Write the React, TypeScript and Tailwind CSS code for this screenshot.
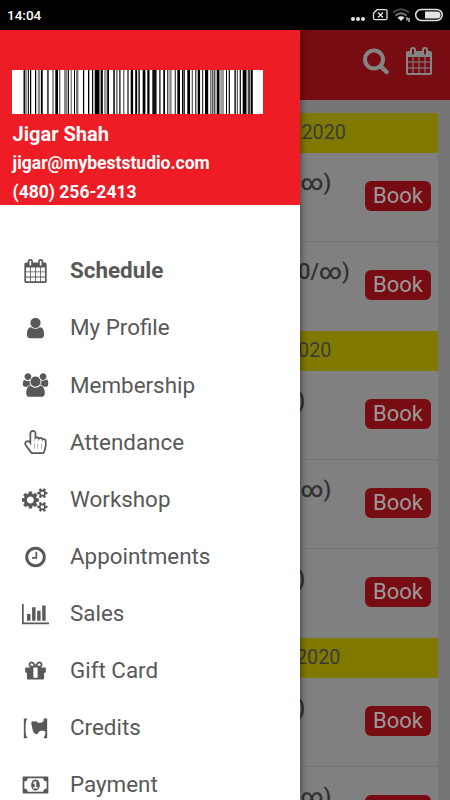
const CALENDAR =
  'M192 1664h288v-288h-288v288zm352 0h320v-288h-320v288zm-352-352h288v-320h-288v320zm352 0h320v-320h-320v320zm-352-384h288v-288h-288v288zm736 736h320v-288h-320v288zm-384-736h320v-288h-320v288zm768 736h288v-288h-288v288zm-384-352h320v-320h-320v320zm-352-864v-288q0-13-9.5-22.5t-22.5-9.5h-64q-13 0-22.5 9.5t-9.5 22.5v288q0 13 9.5 22.5t22.5 9.5h64q13 0 22.5-9.5t9.5-22.5zm736 864h288v-320h-288v320zm-384-384h320v-288h-320v288zm384 0h288v-288h-288v288zm32-480v-288q0-13-9.5-22.5t-22.5-9.5h-64q-13 0-22.5 9.5t-9.5 22.5v288q0 13 9.5 22.5t22.5 9.5h64q13 0 22.5-9.5t9.5-22.5zm384-64v1280q0 52-38 90t-90 38h-1408q-52 0-90-38t-38-90v-1280q0-52 38-90t90-38h128v-96q0-66 47-113t113-47h64q66 0 113 47t47 113v96h384v-96q0-66 47-113t113-47h64q66 0 113 47t47 113v96h128q52 0 90 38t38 90z'
const USER =
  'M1536 1399q0 109-62.5 187t-150.5 78h-854q-88 0-150.5-78t-62.5-187q0-85 8.5-160.5t31.5-152 58.5-131 94-89 134.5-34.5q131 128 313 128t313-128q76 0 134.5 34.5t94 89 58.5 131 31.5 152 8.5 160.5zm-256-887q0 159-112.5 271.5t-271.5 112.5-271.5-112.5-112.5-271.5 112.5-271.5 271.5-112.5 271.5 112.5 112.5 271.5z'
const USERS =
  'M657 896q-162 5-265 128h-134q-82 0-138-40.5t-56-118.5q0-353 124-353 6 0 43.5 21t97.5 42.5 119 21.5q67 0 133-23-5 37-5 66 0 159 90 293zm1071 637q0 120-73 189.500t-194 69.5h-874q-121 0-194-69.5t-73-189.5q0-53 3.5-103.5t14-109 26.5-108.5 43-97.5 62-81 85.5-53.5 111.500-20q10 0 43 21.500t73 48 107 48 135 21.500 135-21.500 107-48 73-48 43-21.500q61 0 111.500 20t85.5 53.5 62 81 43 97.5 26.500 108.500 14 109 3.500 103.500zm-1024-1277q0 106-75 181t-181 75-181-75-75-181 75-181 181-75 181 75 75 181zm704 384q0 159-112.500 271.500t-271.500 112.500-271.500-112.500-112.500-271.500 112.500-271.500 271.500-112.500 271.500 112.500 112.500 271.500zm576 225q0 78-56 118.500t-138 40.500h-134q-103-123-265-128 90-134 90-293 0-29-5-66 66 23 133 23 59 0 119-21.500t97.500-42.500 43.500-21q124 0 124 353zm-128-609q0 106-75 181t-181 75-181-75-75-181 75-181 181-75 181 75 75 181z'
const HAND =
  'M640 128q-53 0-90.5 37.5t-37.5 90.5v896l-151-202q-41-54-107-54-52 0-89 38t-37 90q0 43 26 77l384 512q38 51 102 51h718q22 0 39.5-13.5t22.500-34.500l92-368q24-96 24-194v-217q0-41-28-71t-68-30-68 28-28 68h-32v-61q0-48-32-81.500t-80-33.500q-46 0-79 33t-33 79v64h-32v-90q0-55-37-94.500t-91-39.500q-53 0-90.500 37.500t-37.500 90.500v96h-32v-570q0-55-37-94.500t-91-39.500zm0-128q107 0 181.500 77.500t74.500 184.500v220q22-2 32-2 99 0 173 69 47-21 99-21 113 0 184 87 27-7 56-7 94 0 159 67.500t65 161.500v217q0 116-28 225l-92 368q-16 64-68 104.500t-118 40.500h-718q-60 0-114.500-27.500t-90.500-74.500l-384-512q-51-68-51-154 0-105 74.500-180.500t179.500-75.500q71 0 130 35v-547q0-106 75-181t181-75zm128 1408v-384h-32v384h32zm256 0v-384h-32v384h32zm256 0v-384h-32v384h32z'
const COGS =
  'M832 896q0-106-75-181t-181-75-181 75-75 181 75 181 181 75 181-75 75-181zm768 512q0-52-38-90t-90-38-90 38-38 90q0 53 37.500 90.500t90.500 37.500 90.500-37.500 37.500-90.500zm0-1024q0-52-38-90t-90-38-90 38-38 90q0 53 37.500 90.500t90.500 37.500 90.500-37.500 37.500-90.500zm-384 421v185q0 10-7 19.500t-16 10.500l-155 24q-11 35-32 76 34 48 90 115 7 11 7 20 0 12-7 19-23 30-82.500 89.500t-78.500 59.500q-11 0-21-7l-115-90q-37 19-77 31-11 108-23 155-7 24-30 24h-186q-11 0-20-7.500t-10-17.500l-23-153q-34-10-75-31l-118 89q-7 7-20 7-11 0-21-8-144-133-144-160 0-9 7-19 10-14 41-53t47-61q-23-44-35-82l-152-24q-10-1-17-9.500t-7-19.500v-185q0-10 7-19.500t16-10.500l155-24q11-35 32-76-34-48-90-115-7-11-7-20 0-12 7-20 22-30 82-89t79-59q11 0 21 7l115 90q34-18 77-32 11-108 23-154 7-24 30-24h186q11 0 20 7.500t10 17.500l23 153q34 10 75 31l118-89q8-7 20-7 11 0 21 8 144 133 144 160 0 8-7 19-12 16-42 54t-45 60q23 48 34 82l152 23q10 2 17 10.500t7 19.500zm640 533v140q0 16-149 31-12 27-30 52 51 113 51 138 0 4-4 7-122 71-124 71-8 0-46-47t-52-68q-20 2-30 2t-30-2q-14 21-52 68t-46 47q-2 0-124-71-4-3-4-7 0-25 51-138-18-25-30-52-149-15-149-31v-140q0-16 149-31 13-29 30-52-51-113-51-138 0-4 4-7 4-2 35-20t59-34 30-16q8 0 46 46.500t52 67.500q20-2 30-2t30 2q51-71 92-112l6-2q4 0 124 70 4 3 4 7 0 25-51 138 17 23 30 52 149 15 149 31zm0-1024v140q0 16-149 31-12 27-30 52 51 113 51 138 0 4-4 7-122 71-124 71-8 0-46-47t-52-68q-20 2-30 2t-30-2q-14 21-52 68t-46 47q-2 0-124-71-4-3-4-7 0-25 51-138-18-25-30-52-149-15-149-31v-140q0-16 149-31 13-29 30-52-51-113-51-138 0-4 4-7 4-2 35-20t59-34 30-16q8 0 46 46.500t52 67.500q20-2 30-2t30 2q51-71 92-112l6-2q4 0 124 70 4 3 4 7 0 25-51 138 17 23 30 52 149 15 149 31z'
const CLOCK =
  'M1024 544v448q0 14-9 23t-23 9h-320q-14 0-23-9t-9-23v-64q0-14 9-23t23-9h224v-352q0-14 9-23t23-9h64q14 0 23 9t9 23zm416 352q0-148-73-273t-198-198-273-73-273 73-198 198-73 273 73 273 198 198 273 73 273-73 198-198 73-273zm224 0q0 209-103 385.500t-279.500 279.500-385.500 103-385.500-103-279.500-279.500-103-385.500 103-385.500 279.500-279.500 385.500-103 385.500 103 279.500 279.500 103 385.500z'
const CHART =
  'M640 896v512h-256v-512h256zm384-512v1024h-256v-1024h256zm1024 1152v128h-2048v-1536h128v1408h1920zm-640-896v768h-256v-768h256zm384-384v1152h-256v-1152h256z'
const GIFT =
  'M1056 1356v-716h-320v716q0 25 18 38.500t46 13.500h192q28 0 46-13.500t18-38.500zm-456-844h195l-126-161q-26-31-69-31-40 0-68 28t-28 68 28 68 68 28zm688-96q0-40-28-68t-68-28q-43 0-69 31l-125 161h194q40 0 68-28t28-68zm376 256v320q0 14-9 23t-23 9h-96v416q0 40-28 68t-68 28h-1088q-40 0-68-28t-28-68v-416h-96q-14 0-23-9t-9-23v-320q0-14 9-23t23-9h440q-93 0-158.500-65.500t-65.500-158.500 65.500-158.500 158.500-65.500q107 0 168 77l128 165 128-165q61-77 168-77 93 0 158.500 65.500t65.500 158.500-65.500 158.500-158.500 65.500h440q14 0 23 9t9 23z'
const CREDITS =
  'M25 187h250v60q-125 60-125 674t125 674v60h-250zM1767 187h-270v70q50 30 0 110q-80 40-110 110q-160 50-310 20q-70-110-210-110q-110 50-220 10q-70 60-70 160q40 100 60 260q30 250 130 420q70 130 220 130q110-20 140-150q60-100 190-120q130-20 240 30q70 0 90 110q-20 220-140 390v30h260z'
const MONEY =
  'M768 1152h384v-96h-128v-448h-114l-148 137 77 80q42-37 55-57h2v288h-128v96zm512-256q0 70-21 142t-59.500 134-101.500 101-138 39-138-39-101.500-101-59.500-134-21-142 21-142 59.500-134 101.500-101 138-39 138 39 101.500 101 59.500 134 21 142zm512 256v-512q-106 0-181-75t-75-181h-1152q0 106-75 181t-181 75v512q106 0 181 75t75 181h1152q0-106 75-181t181-75zm128-832v1152q0 26-19 45t-45 19h-1792q-26 0-45-19t-19-45v-1152q0-26 19-45t45-19h1792q26 0 45 19t19 45z'

const menu = [
  { label: 'Schedule', box: '0 0 1792 1792', icon: CALENDAR },
  { label: 'My Profile', box: '0 0 1792 1792', icon: USER },
  { label: 'Membership', box: '0 0 2048 1792', icon: USERS },
  { label: 'Attendance', box: '-64 0 1792 1792', icon: HAND },
  { label: 'Workshop', box: '0 0 1920 1792', icon: COGS },
  { label: 'Appointments', box: '0 0 1792 1792', icon: CLOCK },
  { label: 'Sales', box: '0 0 2048 1792', icon: CHART },
  { label: 'Gift Card', box: '0 0 1792 1792', icon: GIFT },
  { label: 'Credits', box: '0 0 1792 1792', icon: CREDITS },
  { label: 'Payment', box: '0 0 1920 1792', icon: MONEY },
]

const days = [
  {
    date: '2020',
    shift: 'ml-[1.5px]',
    classes: [
      { slots: '/∞)', shift: '-ml-2' },
      { slots: '0/∞)', shift: '-ml-0.5' },
    ],
  },
  {
    date: '2020',
    shift: '-ml-[13px]',
    classes: [
      { slots: '∞)', shift: '-ml-[25.5px]' },
      { slots: '/∞)', shift: '-ml-2' },
      { slots: '∞)', shift: '-ml-[25.5px]' },
    ],
  },
  {
    date: '2020',
    shift: '-ml-1',
    classes: [
      { slots: '∞)', shift: '-ml-[25.5px]' },
      { slots: '/∞)', shift: '-ml-2' },
    ],
  },
]

// [x, width, shade] of each stripe, on a 251px wide strip
const bars: [number, number, string][] = [
  [11.5, 1.5, '#111'], [13, 2.5, '#999'], [16, 1, '#222'], [18, 1.2, '#000'], [23, 1.2, '#000'],
  [25.7, 2.6, '#888'], [29, 1.7, '#000'], [35.3, 1.3, '#000'], [40, 2, '#999'], [43.3, 2.7, '#000'],
  [47.3, 1, '#333'], [52, 3, '#888'], [55.7, 1.2, '#000'], [58.7, 1, '#555'], [62, 1, '#000'],
  [64, 2.4, '#777'], [71, 1.2, '#000'], [76, 1.3, '#000'], [80, 1.2, '#000'], [82.7, 4.8, '#000'],
  [88.6, 2.2, '#000'], [92, 2.7, '#999'], [95.2, 1.8, '#000'], [101.3, 1.5, '#000'], [104, 1.7, '#777'],
  [107.3, 1.2, '#000'], [111.3, 1, '#333'], [115.3, 1.4, '#333'], [118.7, 2.4, '#000'], [123.2, 2, '#000'],
  [126.3, 1.7, '#333'], [130.7, 2.7, '#000'], [135.3, 2.2, '#000'], [140.3, 4.3, '#111'], [147.3, 1.2, '#000'],
  [151.3, 1.7, '#000'], [155.3, 1, '#000'], [157.3, 2.4, '#888'], [162.7, 1.2, '#333'], [165.3, 2.7, '#000'],
  [170, 1, '#000'], [171.3, 1.7, '#333'], [175.3, 2.7, '#000'], [179.7, 1.2, '#555'], [183.3, 1, '#000'],
  [185.7, 2.4, '#000'], [190, 1.2, '#333'], [193, 3.2, '#000'], [198, 1.5, '#777'], [200.3, 1, '#000'],
  [202.3, 1, '#000'], [204.7, 2.8, '#000'], [208.3, 3.7, '#999'], [214, 1, '#000'], [216.7, 1.2, '#000'],
  [222.3, 1.7, '#333'], [224.8, 1.2, '#555'], [227.7, 1.2, '#000'], [230.7, 3.8, '#000'], [235.7, 2.3, '#444'],
  [238.6, 2.2, '#000'],
]

const Glyph = ({ d, box, className }: { d: string; box: string; className: string }) => (
  <svg viewBox={box} className={className} fill="currentColor">
    <path d={d} />
  </svg>
)

function StatusBar() {
  return (
    <div className="flex h-[30px] shrink-0 items-center justify-between bg-black pr-[6px] pl-[7px] text-white">
      <span className="pt-px text-[13.5px] leading-none font-medium">14:04</span>
      <svg viewBox="0 0 94 16" className="h-4 w-[94px]" fill="none" stroke="#e4e4e4">
        <g fill="#e4e4e4" stroke="none">
          <circle cx="3" cy="12" r="2" />
          <circle cx="8" cy="12" r="2" />
          <circle cx="13" cy="12" r="2" />
        </g>
        <path d="M27 2.700h8.500q1.500 0 1.500 1.500v7q0 1.500-1.500 1.500h-10.500q-1.500 0-1.500-1.500v-5z" strokeWidth="1.300" />
        <path d="M28 5.500l5 5M33 5.500l-5 5" strokeWidth="1.400" />
        <path d="M43 5.500q8-6.500 16 0" stroke="#4a4a4a" strokeWidth="2" />
        <path d="M45.500 8.500q5.500-4.500 11 0" stroke="#777" strokeWidth="2" />
        <path d="M47.500 10.500q3.500-2.500 7 0l-3.500 3.500z" fill="#e4e4e4" stroke="none" />
        <path d="M57 10v3.500M59 11v4" strokeWidth="1.200" />
        <rect x="65.700" y="2.500" width="26.500" height="11" rx="5.500" strokeWidth="1.500" />
        <path d="M75 4.500h12q3.500 0 3.500 3.500t-3.500 3.500h-12z" fill="#e4e4e4" stroke="none" />
      </svg>
    </div>
  )
}

function Schedule() {
  return (
    <div className="flex min-w-0 grow flex-col bg-[#767676]">
      <header className="flex h-[70px] shrink-0 items-center justify-end gap-[15px] bg-[#770d12] pr-[17px] pb-2 text-[#858585]">
        <svg viewBox="0 0 28 28" className="size-7" fill="none" stroke="currentColor" strokeWidth="4">
          <circle cx="12" cy="12.500" r="9" />
          <path d="M18.500 19l6 6" strokeWidth="4.500" strokeLinecap="round" />
        </svg>
        <Glyph d={CALENDAR} box="0 0 1792 1792" className="size-7" />
      </header>
      <div className="mt-[13px] mr-3 bg-[#808080]">
        {days.map((day, i) => (
          <section key={i}>
            <div className="flex h-10 items-center bg-[#807900] text-[19.7px] text-[#3b3b3b]">
              <span className={day.shift}>{day.date}</span>
            </div>
            {day.classes.map((c, j) => (
              <div key={j} className="flex h-[89px] justify-between border-b border-[#747474] pr-[7px] last:border-b-0">
                <span className={`pt-[15px] text-[22px] leading-[30px] font-medium text-[#303030] ${c.shift}`}>
                  {c.slots}
                </span>
                <button className="mt-7 h-[30px] w-[66px] rounded-[6px] bg-[#770d12] pb-px text-[22px] leading-[29px] text-[#9a9a9a]">
                  Book
                </button>
              </div>
            ))}
          </section>
        ))}
      </div>
    </div>
  )
}

function Drawer() {
  return (
    <aside className="z-10 flex w-[300px] shrink-0 flex-col overflow-hidden bg-white shadow-[0_0_8px_rgba(0,0,0,0.6)]">
      <div className="h-[175px] shrink-0 bg-[#ee1c25] pt-10 pl-3 font-bold text-white">
        <svg viewBox="0 0 251 44" className="h-11 w-[251px] bg-white">
          {bars.map(([x, w, shade]) => (
            <rect key={x} x={x} width={w} height="44" fill={shade} />
          ))}
        </svg>
        <div className="pl-[0.6px]">
          <p className="mt-[7px] text-[20px] leading-[26px]">Jigar Shah</p>
          <p className="mt-[3px] text-[17.5px] leading-[27px]">jigar@mybeststudio.com</p>
          <p className="mt-[2px] text-[17.5px] leading-[26px]">(480) 256-2413</p>
        </div>
      </div>
      <nav className="mt-[37.6px] flex flex-col text-[22.4px] text-[#585858]">
        {menu.map((item, i) => (
          <a key={item.label} className="flex h-[57.1px] shrink-0 items-center">
            <span className="flex w-[70px] justify-center">
              <Glyph d={item.icon} box={item.box} className="h-6 w-[27px]" />
            </span>
            <span className={i === 0 ? 'font-bold' : ''}>{item.label}</span>
          </a>
        ))}
      </nav>
    </aside>
  )
}

export default function App() {
  return (
    <div className="flex h-[800px] w-[450px] flex-col overflow-hidden font-[Roboto,sans-serif]">
      <StatusBar />
      <div className="flex min-h-0 grow">
        <Drawer />
        <Schedule />
      </div>
    </div>
  )
}
